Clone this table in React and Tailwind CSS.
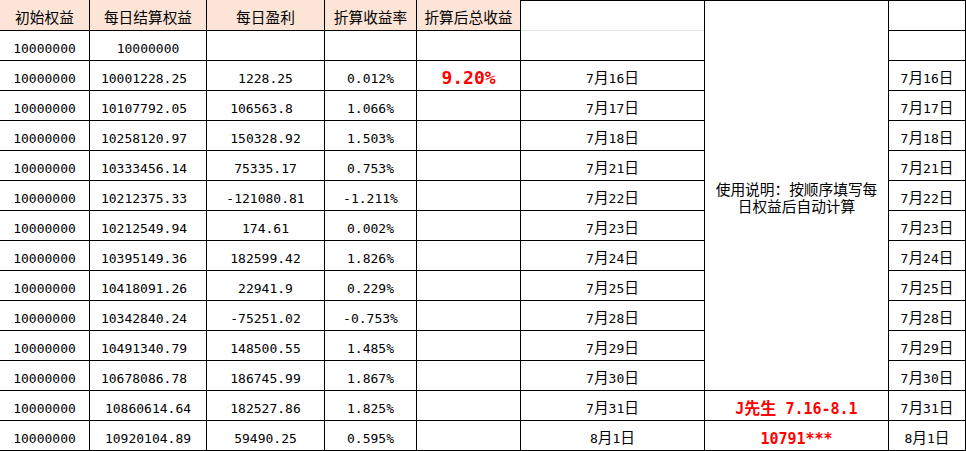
import React from "react";

const LAT = "font-['DejaVu_Sans_Mono',monospace] text-[13px]";
const CJK = "font-['Noto_Sans_CJK_SC',sans-serif] text-[14.7px]";
const RLAT = "font-['DejaVu_Sans_Mono',monospace] text-[15px] font-bold";
const RCJK = "font-['Noto_Sans_CJK_SC',sans-serif] text-[16px] font-bold";

function Mixed({ text, lat = LAT, cjk = CJK }) {
  const parts = text.match(/[\x00-\x7f]+|[^\x00-\x7f]+/g) || [];
  return (
    <span className="whitespace-pre leading-[16px]">
      {parts.map((p, i) => (
        <span key={i} className={/^[\x00-\x7f]/.test(p) ? lat : cjk}>
          {p}
        </span>
      ))}
    </span>
  );
}

const rows = [
  ["10000000", "10000000", "", "", "", "", "", 0, 0],
  ["10000000", "10001228.25", "1228.25", "0.012%", "9.20%", "7月16日", "7月16日", 1, 0],
  ["10000000", "10107792.05", "106563.8", "1.066%", "", "7月17日", "7月17日", 1, 1],
  ["10000000", "10258120.97", "150328.92", "1.503%", "", "7月18日", "7月18日", 1, 0],
  ["10000000", "10333456.14", "75335.17", "0.753%", "", "7月21日", "7月21日", 1, 0],
  ["10000000", "10212375.33", "-121080.81", "-1.211%", "", "7月22日", "7月22日", 1, 0],
  ["10000000", "10212549.94", "174.61", "0.002%", "", "7月23日", "7月23日", 1, 0],
  ["10000000", "10395149.36", "182599.42", "1.826%", "", "7月24日", "7月24日", 1, 0],
  ["10000000", "10418091.26", "22941.9", "0.229%", "", "7月25日", "7月25日", 1, 0],
  ["10000000", "10342840.24", "-75251.02", "-0.753%", "", "7月28日", "7月28日", 1, 0],
  ["10000000", "10491340.79", "148500.55", "1.485%", "", "7月29日", "7月29日", 1, 0],
  ["10000000", "10678086.78", "186745.99", "1.867%", "", "7月30日", "7月30日", 1, 0],
  ["10000000", "10860614.64", "182527.86", "1.825%", "", "7月31日", "7月31日", 0, 0],
  ["10000000", "10920104.89", "59490.25", "0.595%", "", "8月1日", "8月1日", 0, 0],
];

const CELL = "bg-white flex items-center justify-center pt-[5px] text-black";

export default function App() {
  const headers = ["初始权益", "每日结算权益", "每日盈利", "折算收益率", "折算后总收益"];
  return (
    <div className="w-[966px] h-[451px] bg-white">
      <div className="grid grid-cols-[89px_116px_117px_91px_103px_183px_183px_76px] grid-rows-[30px_repeat(14,29px)] gap-px bg-black pr-px pb-px w-[966px]">
        {headers.map((h, i) => (
          <div key={h} className="bg-[#fce4d6] flex items-center justify-center pt-[3px] text-black">
            <Mixed text={h} />
          </div>
        ))}
        {/* col6 header + row1 merged visually with a light gridline */}
        <div className="row-span-2 bg-white border-t border-black flex flex-col">
          <div className="h-[29px]" />
          <div className="h-px bg-[#e3e3e3]" />
          <div className="h-[29px]" />
        </div>
        {/* col7 merged note */}
        <div className="row-span-13 bg-white border-t border-black flex items-center justify-center pt-[2px] text-black">
          <div className={"text-center leading-[17px] " + CJK}>
            使用说明：按顺序填写每
            <br />
            日权益后自动计算
          </div>
        </div>
        <div className="bg-white border-t border-black" />

        {rows.map((r, ri) => {
          const [a, b, c, d, e, f, g, shiftB, shiftC] = r;
          return (
            <React.Fragment key={ri}>
              <div className={CELL}>
                <Mixed text={a} />
              </div>
              <div className={CELL + (shiftB ? " pr-2" : "")}>
                <Mixed text={b} />
              </div>
              <div className={CELL + (shiftC ? " pr-2" : "")}>
                <Mixed text={c} />
              </div>
              <div className={CELL}>
                <Mixed text={d} />
              </div>
              <div className={CELL}>
                {e ? (
                  <span className="font-['DejaVu_Sans_Mono',monospace] text-[18px] font-bold text-[#ff0000] leading-[18px]">
                    {e}
                  </span>
                ) : null}
              </div>
              {ri > 0 ? (
                <div className={CELL}>
                  <Mixed text={f} />
                </div>
              ) : null}
              {ri === 12 ? (
                <div className={CELL + " text-[#ff0000]"}>
                  <span className="text-[#ff0000]">
                    <Mixed text="J先生 7.16-8.1" lat={RLAT} cjk={RCJK} />
                  </span>
                </div>
              ) : null}
              {ri === 13 ? (
                <div className={CELL + " text-[#ff0000]"}>
                  <span className="text-[#ff0000]">
                    <Mixed text="10791***" lat={RLAT} cjk={RCJK} />
                  </span>
                </div>
              ) : null}
              <div className={CELL}>{g ? <Mixed text={g} /> : null}</div>
            </React.Fragment>
          );
        })}
      </div>
    </div>
  );
}
